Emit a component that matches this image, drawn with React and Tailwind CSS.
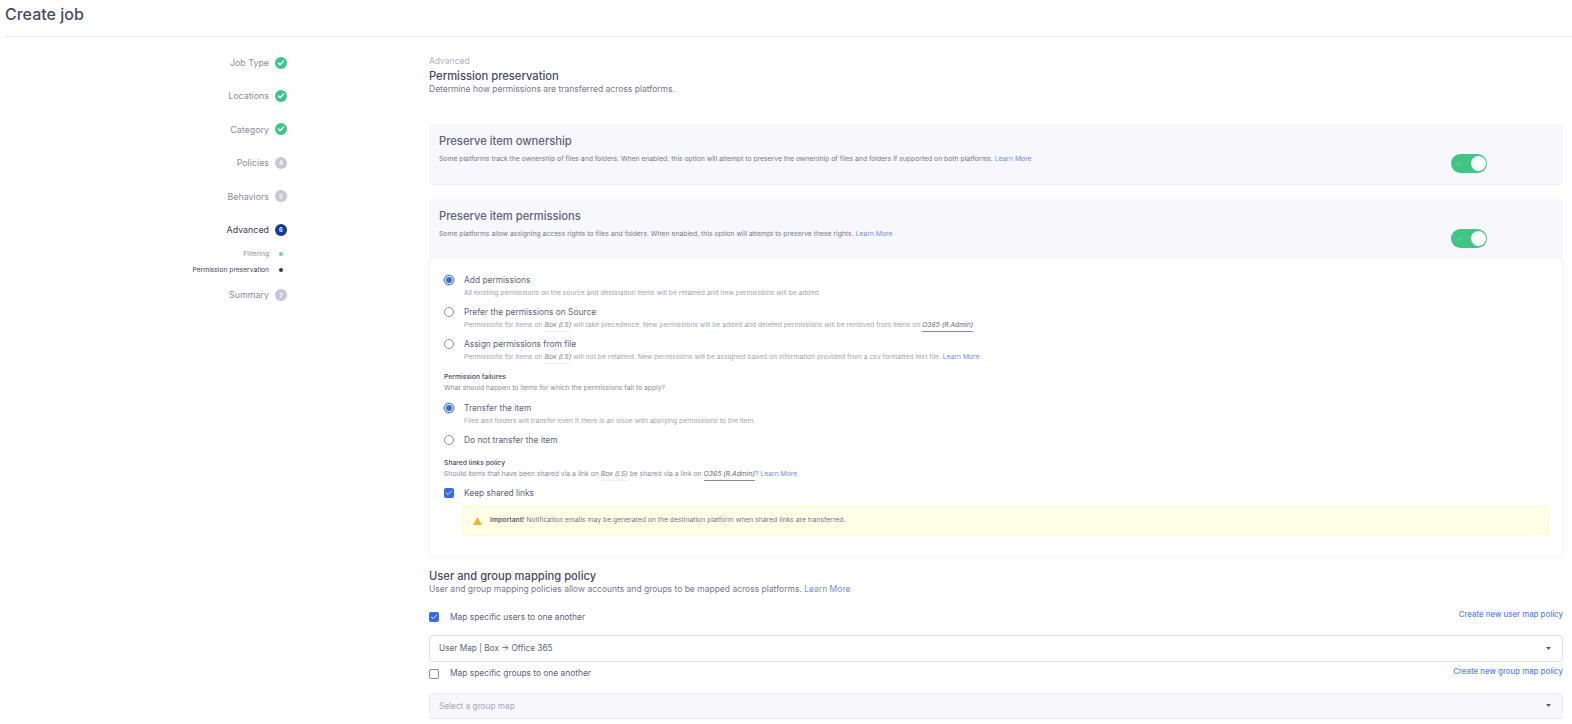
import { Check } from 'lucide-react'

const STEPS = [
  { label: 'Job Type', state: 'done' },
  { label: 'Locations', state: 'done' },
  { label: 'Category', state: 'done' },
  { label: 'Policies', state: 'todo', n: 4 },
  { label: 'Behaviors', state: 'todo', n: 5 },
  { label: 'Advanced', state: 'active', n: 6 },
]

const LearnMore = () => <span className="text-[#6f8fe8]">Learn More</span>

function StepBadge({ state, n }) {
  if (state === 'done') {
    return (
      <span className="w-3 h-3 rounded-full bg-[#3fc687] flex items-center justify-center">
        <Check className="w-2 h-2 text-white" strokeWidth={4} />
      </span>
    )
  }
  const bg = state === 'active' ? 'bg-[#14399b]' : 'bg-[#c6c6d6]'
  return (
    <span className={`w-3 h-3 rounded-full ${bg} text-white text-[6px] font-semibold flex items-center justify-center`}>
      {n}
    </span>
  )
}

function Step({ label, state, n }) {
  const color = state === 'active' ? 'text-[#3c3c56]' : 'text-[#8a8aa0]'
  return (
    <div className="h-[33.4px] flex items-center justify-end gap-[6px]">
      <span className={`text-[8.9px] ${color}`}>{label}</span>
      <StepBadge state={state} n={n} />
    </div>
  )
}

function SubStep({ label, dot, color }) {
  return (
    <div className="h-4 flex items-center justify-end">
      <span className={`text-[6.7px] ${color}`}>{label}</span>
      <span className={`w-[4px] h-[4px] rounded-full ${dot} ml-[10px] mr-[4px]`} />
    </div>
  )
}

function Toggle() {
  return (
    <div className="w-9 h-[18.5px] rounded-full bg-[#3fc687] flex items-center justify-between pl-[5px] pr-[1.5px] mt-[20.5px] mr-[76px] shrink-0">
      <Check className="w-[7px] h-[7px] text-[#9fe4c3]" strokeWidth={2} />
      <span className="w-[15px] h-[15px] rounded-full bg-white" />
    </div>
  )
}

function Radio({ on }) {
  return (
    <span className={`w-[10px] h-[10px] rounded-full border bg-white flex items-center justify-center shrink-0 ${on ? 'border-[#3a6ae0] ring-1 ring-[#c9d6f7]' : 'border-[#8a8aa0]'}`}>
      {on && <span className="w-[6px] h-[6px] rounded-full bg-[#3a6ae0]" />}
    </span>
  )
}

function Checkbox({ on }) {
  return on ? (
    <span className="w-[10px] h-[10px] rounded-[2px] bg-[#3a6ae0] flex items-center justify-center shrink-0">
      <Check className="w-2 h-2 text-white" strokeWidth={2.5} />
    </span>
  ) : (
    <span className="w-[10px] h-[10px] rounded-[2px] border border-[#8a8aa0] bg-white shrink-0" />
  )
}

function Option({ on, label, children, className = '' }) {
  return (
    <div className={className}>
      <div className="h-3 flex items-center">
        <span className="w-5 flex"><Radio on={on} /></span>
        <span className="text-[8.4px] text-[#62627a]">{label}</span>
      </div>
      {children && <p className="mt-[2px] h-[10px] leading-[10px] pl-5 text-[6.75px] text-[#a2a2b5] whitespace-nowrap">{children}</p>}
    </div>
  )
}

const Tag = ({ children, strong }) => (
  <span className={`italic pb-[2px] border-b ${strong ? 'text-[#62627a] border-[#8a8aa0]' : 'text-[#77778d] border-[#eeeef4]'}`}>{children}</span>
)

function Caret() {
  return (
    <svg width="5" height="3" viewBox="0 0 5 3" className="fill-[#5c5c70]">
      <path d="M0 0h5L2.5 3z" />
    </svg>
  )
}

function SelectBox({ disabled, children }) {
  return (
    <div className={`h-[26.5px] rounded-[4px] border flex items-center justify-between pl-[9px] pr-[11px] text-[8.25px] ${disabled ? 'bg-[#f7f7fc] border-[#ecebf3] text-[#a8a8ba]' : 'bg-white border-[#dedee8] text-[#62627a]'}`}>
      <span>{children}</span>
      <Caret />
    </div>
  )
}

function CheckRow({ on, label, link, className = '' }) {
  return (
    <div className={`flex justify-between h-[14px] ${className}`}>
      <div className="flex items-center">
        <span className="w-[21px] flex"><Checkbox on={on} /></span>
        <span className="text-[8.4px] text-[#62627a]">{label}</span>
      </div>
      <span className="text-[7.85px] font-medium text-[#5f83e6] -mt-[1px]">{link}</span>
    </div>
  )
}

export default function App() {
  return (
    <div className="h-[724px] overflow-hidden bg-white font-[Inter,sans-serif]">
      <header className="h-[37px] ml-[5px] pt-[2px] border-b border-[#eaecf6]">
        <h1 className="text-[16px] text-[#4a4a5e] font-medium">Create job</h1>
      </header>

      <div className="flex">
        <aside className="w-[287px] shrink-0 pt-[9px] mr-[142px]">
          {STEPS.map(s => <Step key={s.label} {...s} />)}
          <div>
            <SubStep label="Filtering" dot="bg-[#6fd8a6]" color="text-[#8a8aa0]" />
            <SubStep label="Permission preservation" dot="bg-[#14399b]" color="text-[#3c3c56]" />
          </div>
          <Step label="Summary" state="todo" n={7} />
        </aside>

        <main className="flex-1 mr-[9px] pt-[18px]">
          <p className="text-[8.5px] leading-3 text-[#b0b0c0]">Advanced</p>
          <h2 className="mt-[2px] text-[11.2px] leading-[14px] font-medium text-[#4a4a5e]">Permission preservation</h2>
          <p className="text-[8.5px] leading-3 text-[#77778d]">Determine how permissions are transferred across platforms.</p>

          <section className="mt-[29px] h-[61px] bg-[#f7f7fc] border-b border-[#eeeef6] rounded-[4px] flex justify-between pl-[10px] pt-[9.5px]">
            <div>
              <h3 className="text-[11.2px] leading-[14px] font-medium text-[#62627a]">Preserve item ownership</h3>
              <p className="mt-[6.5px] text-[6.8px] leading-[10px] text-[#77778d]">
                Some platforms track the ownership of files and folders. When enabled, this option will attempt to preserve the ownership of files and folders if supported on both platforms. <LearnMore />
              </p>
            </div>
            <Toggle />
          </section>

          <section className="mt-[14px]">
            <div className="h-[60px] bg-[#f7f7fc] rounded-t-[4px] flex justify-between pl-[10px] pt-[9.5px]">
              <div>
                <h3 className="text-[11.2px] leading-[14px] font-medium text-[#62627a]">Preserve item permissions</h3>
                <p className="mt-[6.5px] text-[6.8px] leading-[10px] text-[#77778d]">
                  Some platforms allow assigning access rights to files and folders. When enabled, this option will attempt to preserve these rights. <LearnMore />
                </p>
              </div>
              <Toggle />
            </div>

            <div className="border border-t-0 border-[#f3f3f8] rounded-b-[4px] pl-[14px] pr-[13px] pt-[15px] pb-[21px]">
              <Option on label="Add permissions" className="h-8">
                All existing permissions on the source and destination items will be retained and new permissions will be added.
              </Option>
              <Option label="Prefer the permissions on Source" className="h-8">
                Permissions for items on <Tag>Box (I.S)</Tag> will take precedence. New permissions will be added and deleted permissions will be removed from items on <Tag strong>O365 (R.Admin)</Tag>.
              </Option>
              <Option label="Assign permissions from file" className="h-8">
                Permissions for items on <Tag>Box (I.S)</Tag> will not be retained. New permissions will be assigned based on information provided from a csv formatted text file. <LearnMore />
              </Option>

              <h4 className="mt-[2px] text-[6.8px] leading-[10px] font-medium text-[#4a4a5e]">Permission failures</h4>
              <p className="mt-[1px] text-[6.8px] leading-[10px] text-[#8a8aa0]">What should happen to items for which the permissions fail to apply?</p>

              <Option on label="Transfer the item" className="mt-[9px] h-8">
                Files and folders will transfer even if there is an issue with applying permissions to the item.
              </Option>
              <Option label="Do not transfer the item" className="h-6" />

              <h4 className="text-[6.8px] leading-[10px] font-medium text-[#4a4a5e]">Shared links policy</h4>
              <p className="mt-[1px] text-[6.8px] leading-[10px] text-[#8a8aa0]">
                Should items that have been shared via a link on <Tag>Box (I.S)</Tag> be shared via a link on <Tag strong>O365 (R.Admin)</Tag>? <LearnMore />
              </p>

              <div className="mt-2 h-3 flex items-center">
                <span className="w-5 flex"><Checkbox on /></span>
                <span className="text-[8.4px] text-[#62627a]">Keep shared links</span>
              </div>

              <div className="mt-[7px] ml-[18px] h-[29px] bg-[#ffffe6] border border-[#fbfbc8] rounded-[3px] flex items-center pl-[10px]">
                <svg width="9" height="8" viewBox="0 0 9 8" className="fill-[#f2b233] mr-[8px]">
                  <path d="M4.5 0 9 8H0z" />
                </svg>
                <span className="text-[6.8px] text-[#77778d]">
                  <b className="font-semibold text-[#5c5c70]">Important!</b> Notification emails may be generated on the destination platform when shared links are transferred.
                </span>
              </div>
            </div>
          </section>

          <h2 className="mt-[12px] text-[11.2px] leading-[14px] font-medium text-[#4a4a5e]">User and group mapping policy</h2>
          <p className="text-[8.5px] leading-3 text-[#77778d]">
            User and group mapping policies allow accounts and groups to be mapped across platforms. <LearnMore />
          </p>

          <CheckRow on label="Map specific users to one another" link="Create new user map policy" className="mt-[15px]" />
          <div className="mt-[11px]"><SelectBox>User Map | Box → Office 365</SelectBox></div>
          <CheckRow label="Map specific groups to one another" link="Create new group map policy" className="mt-[5px]" />
          <div className="mt-[12px]"><SelectBox disabled>Select a group map</SelectBox></div>
        </main>
      </div>
    </div>
  )
}
